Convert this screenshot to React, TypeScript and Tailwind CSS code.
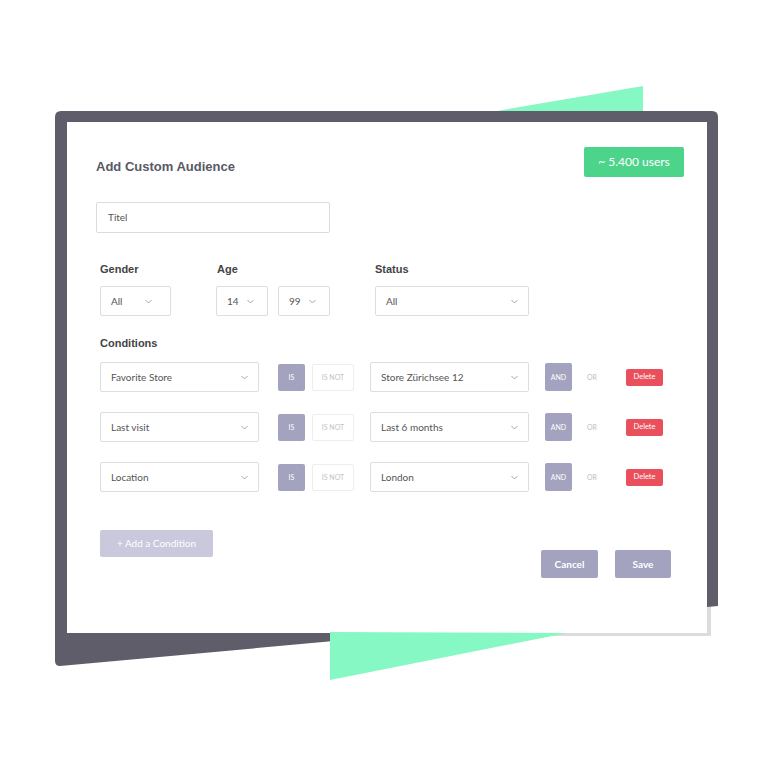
import React from 'react';

const sans = { fontFamily: 'Lato, "Open Sans", sans-serif' };
const head = { fontFamily: '"Liberation Sans", Arial, sans-serif' };

const Chevron = () => (
  <svg width="7" height="5" viewBox="0 0 7 5" className="shrink-0">
    <polyline points="0.5,1 3.5,4 6.5,1" fill="none" stroke="#9a9aa5" strokeWidth="0.9" />
  </svg>
);

const Select: React.FC<{ label: string; width: string; chevronAt?: string }> = ({ label, width, chevronAt }) => (
  <div
    className={`${width} h-[30px] border border-[#dedede] rounded-[2px] bg-white flex items-center justify-between pl-[10px] pr-[10px] text-[10px] text-[#555]`}
    style={sans}
  >
    <span>{label}</span>
    <span className={chevronAt}>
      <Chevron />
    </span>
  </div>
);

const conditions = [
  { field: 'Favorite Store', value: 'Store Zürichsee 12' },
  { field: 'Last visit', value: 'Last 6 months' },
  { field: 'Location', value: 'London' },
];

const ConditionRow: React.FC<{ field: string; value: string }> = ({ field, value }) => (
  <div className="flex items-center h-[30px]">
    <Select label={field} width="w-[159px]" />
    <div className="ml-[19px] w-[27px] h-[27px] rounded-[2px] bg-[#a3a2bf] flex items-center justify-center text-[7px] text-white" style={sans}>
      IS
    </div>
    <div className="ml-[7px] w-[42px] h-[27px] rounded-[2px] border border-[#eeeeee] flex items-center justify-center text-[7px] text-[#c2c2c8]" style={sans}>
      IS NOT
    </div>
    <div className="ml-[16px]">
      <Select label={value} width="w-[159px]" />
    </div>
    <div className="ml-[16px] w-[27px] h-[28px] rounded-[2px] bg-[#a3a2bf] flex items-center justify-center text-[7px] text-white" style={sans}>
      AND
    </div>
    <div className="ml-[15px] w-[10px] text-[7px] text-[#bdbdc3]" style={sans}>
      OR
    </div>
    <div className="ml-[29px] w-[37px] h-[17px] rounded-[2px] bg-[#e9505c] flex items-center justify-center text-[7.5px] text-white" style={sans}>
      Delete
    </div>
  </div>
);

export default function App() {
  return (
    <div className="relative w-[768px] h-[768px] bg-white overflow-hidden">
      <svg className="absolute inset-0" width="768" height="768" viewBox="0 0 768 768">
        <polygon points="497,111 643,86 643,111" fill="#86f8c4" />
        <rect x="70" y="125" width="641" height="511" fill="#dcdcdc" />
        <path
          d="M61,111 L712,111 Q718,111 718,117 L718,606 L60,666 Q55,666 55,661 L55,117 Q55,111 61,111 Z"
          fill="#5e5d69"
        />
      </svg>

      <div className="relative pt-[122px] pl-[67px]">
        <div className="relative w-[640px] h-[511px] bg-white">
          <svg className="absolute left-[263px] top-[511px]" width="240" height="50" viewBox="0 0 240 50" style={{ overflow: 'visible' }}>
            <polygon points="0,-1 237,0 0,47" fill="#86f8c4" />
          </svg>

          {/* header */}
          <div className="flex justify-between items-start pl-[29px] pr-[23px] pt-[25px]">
            <h1 className="mt-[10px] text-[13px] font-bold text-[#595966]" style={head}>
              Add Custom Audience
            </h1>
            <div className="w-[100px] h-[30px] rounded-[2px] bg-[#4dd48b] flex items-center justify-center text-[12px] text-white" style={sans}>
              ~ 5.400 users
            </div>
          </div>

          <div className="ml-[29px] mt-[25px] w-[234px] h-[31px] border border-[#dcdcdc] rounded-[2px] flex items-center pl-[11px] text-[10px] text-[#555]" style={sans}>
            Titel
          </div>

          {/* filters */}
          <div className="ml-[33px] mt-[28px] flex items-start">
            <div className="w-[71px]">
              <div className="h-[14px] text-[11px] font-bold text-[#444]" style={head}>Gender</div>
              <div className="mt-[11px]">
                <Select label="All" width="w-[71px]" chevronAt="mr-[8px]" />
              </div>
            </div>
            <div className="ml-[45px]">
              <div className="h-[14px] pl-[1px] text-[11px] font-bold text-[#444]" style={head}>Age</div>
              <div className="mt-[11px] flex gap-[10px]">
                <Select label="14" width="w-[52px]" chevronAt="mr-[3px]" />
                <Select label="99" width="w-[52px]" chevronAt="mr-[3px]" />
              </div>
            </div>
            <div className="ml-[45px]">
              <div className="h-[14px] text-[11px] font-bold text-[#444]" style={head}>Status</div>
              <div className="mt-[11px]">
                <Select label="All" width="w-[154px]" />
              </div>
            </div>
          </div>

          <div className="ml-[33px] mt-[19px] h-[14px] text-[11px] font-bold text-[#444]" style={head}>
            Conditions
          </div>

          <div className="ml-[33px] mt-[13px] flex flex-col gap-[20px]">
            {conditions.map((c) => (
              <ConditionRow key={c.field} field={c.field} value={c.value} />
            ))}
          </div>

          {/* footer */}
          <div className="ml-[33px] mr-[36px] mt-[38px] flex justify-between items-start">
            <div className="w-[113px] h-[27px] rounded-[2px] bg-[#c9c8dc] flex items-center justify-center text-[10px] text-white" style={sans}>
              + Add a Condition
            </div>
            <div className="mt-[20px] flex gap-[17px]">
              <div className="w-[57px] h-[28px] rounded-[2px] bg-[#a3a2bf] flex items-center justify-center text-[10px] font-bold text-white" style={sans}>
                Cancel
              </div>
              <div className="w-[56px] h-[28px] rounded-[2px] bg-[#a3a2bf] flex items-center justify-center text-[10px] font-bold text-white" style={sans}>
                Save
              </div>
            </div>
          </div>
        </div>
      </div>
    </div>
  );
}
